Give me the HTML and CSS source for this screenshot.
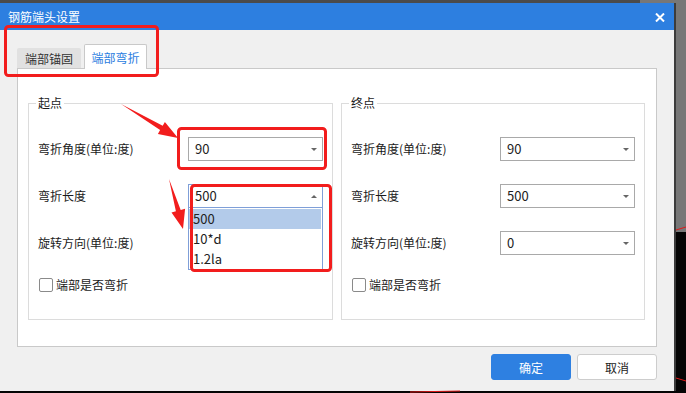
FILE: index.html
```html
<!DOCTYPE html>
<html lang="zh-CN">
<head>
<meta charset="utf-8">
<title>钢筋端头设置</title>
<link rel="stylesheet" href="styles.css">
</head>
<body>
<div class="dialog">
  <div class="titlebar">
    <span class="title">钢筋端头设置</span>
    <svg class="close" width="10" height="9" viewBox="0 0 10 9"><path d="M1 0.5 L9 8.5 M9 0.5 L1 8.5" stroke="#fff" stroke-width="2"/></svg>
  </div>
  <div class="content">
    <div class="tabs">
      <div class="tab">端部锚固</div>
      <div class="tab active">端部弯折</div>
    </div>
    <div class="panel">
      <fieldset class="group">
        <legend>起点</legend>
        <div class="row">
          <span class="label">弯折角度(单位:度)</span>
          <div class="select"><span class="value">90</span><i class="caret"></i></div>
        </div>
        <div class="row">
          <span class="label">弯折长度</span>
          <div class="select open"><span class="value">500</span><i class="caret up"></i>
            <ul class="list">
              <li class="hl">500</li>
              <li>10*d</li>
              <li>1.2la</li>
            </ul>
          </div>
        </div>
        <div class="row">
          <span class="label">旋转方向(单位:度)</span>
          <div class="select covered"><span class="value">0</span><i class="caret"></i></div>
        </div>
        <label class="check"><span class="box"></span>端部是否弯折</label>
      </fieldset>
      <fieldset class="group">
        <legend>终点</legend>
        <div class="row">
          <span class="label">弯折角度(单位:度)</span>
          <div class="select"><span class="value">90</span><i class="caret"></i></div>
        </div>
        <div class="row">
          <span class="label">弯折长度</span>
          <div class="select"><span class="value">500</span><i class="caret"></i></div>
        </div>
        <div class="row">
          <span class="label">旋转方向(单位:度)</span>
          <div class="select"><span class="value">0</span><i class="caret"></i></div>
        </div>
        <label class="check"><span class="box"></span>端部是否弯折</label>
      </fieldset>
    </div>
    <div class="buttons">
      <button class="btn primary">确定</button>
      <button class="btn">取消</button>
    </div>
  </div>
</div>
<svg class="annot" width="686" height="393" viewBox="0 0 686 393">
  <g fill="none" stroke="#f21d1d" stroke-width="3">
    <rect x="5.5" y="26.5" width="152" height="49" rx="3"/>
    <rect x="178.5" y="128.5" width="147" height="40" rx="3"/>
    <rect x="191.5" y="185.5" width="139" height="85" rx="3"/>
  </g>
  <g fill="#f21d1d">
    <polygon points="121,104 162.7,125.7 164.9,121.9 178,138 157.9,133.9 160.1,130.1"/>
    <polygon points="169,179 180.7,210 185.1,208.8 183,229 171.5,212.4 175.9,211.3"/>
  </g>
  <g stroke="#e01818" stroke-width="1">
    <line x1="676" y1="230" x2="686" y2="227"/>
    <line x1="676" y1="378" x2="686" y2="381"/>
    <line x1="410" y1="392" x2="460" y2="391"/>
  </g>
</svg>
</body>
</html>
```

FILE: styles.css
```css
* { box-sizing: border-box; }

html, body {
  margin: 0;
  padding: 0;
}

body {
  width: 686px;
  height: 393px;
  overflow: hidden;
  position: relative;
  font-family: "Noto Sans CJK SC", "Noto Sans", sans-serif;
  font-size: 12px;
  color: #1a1a1a;
  background:
    linear-gradient(#4b4b4b, #4b4b4b) 0 0 / 640px 3px no-repeat,
    linear-gradient(#777 0 232px, #050505 232px);
  padding-top: 3px;
}

.dialog {
  width: 674px;
  height: 388px;
  background: #f0f0f0;
  box-shadow: 2px 0 0 #3c3c3c;
  display: flex;
  flex-direction: column;
}

.titlebar {
  height: 27px;
  background: #2d7fe0;
  color: #fff;
  display: flex;
  align-items: center;
  justify-content: space-between;
  padding: 0 9px 0 8px;
}

.title {
  font-size: 12px;
  line-height: 16px;
}

.close { display: block; margin-top: 1px; }

.content {
  flex: 1;
  padding: 14px 17px 0 17px;
  display: flex;
  flex-direction: column;
}

.tabs {
  display: flex;
  align-items: flex-end;
  gap: 3px;
  height: 24px;
}

.tab {
  height: 20px;
  width: 64px;
  background: #e1e1e1;
  color: #333;
  display: flex;
  align-items: center;
  justify-content: center;
  font-size: 12px;
  border-radius: 2px 2px 0 0;
}

.tab.active {
  height: 25px;
  width: 63px;
  margin-bottom: -1px;
  background: #fff;
  color: #2b7de0;
  border: 1px solid #c9c9c9;
  border-bottom: none;
  position: relative;
  z-index: 1;
  padding-top: 1px;
}

.panel {
  height: 279px;
  background: #fff;
  border: 1px solid #c9c9c9;
  padding: 26px 11px 0 10px;
  display: grid;
  grid-template-columns: 305px 304px;
  column-gap: 8px;
  align-items: start;
}

.group {
  margin: 0;
  border: 1px solid #dcdcdc;
  padding: 26px 9px 26px 9px;
  min-width: 0;
}

.group legend {
  padding: 0 2px;
  margin-left: -2px;
  font-size: 12px;
  line-height: 16px;
  color: #1a1a1a;
}

.row {
  display: flex;
  align-items: center;
  justify-content: space-between;
  height: 24px;
}

.row + .row { margin-top: 23px; }

.label { line-height: 16px; }

.select {
  position: relative;
  width: 135px;
  height: 24px;
  border: 1px solid #a9a9a9;
  background: #fff;
  display: flex;
  align-items: center;
  justify-content: space-between;
  padding: 0 5px 0 6px;
  font-size: 13px;
  color: #222;
}

.select.covered { visibility: hidden; }

.value { line-height: 16px; }

.caret {
  width: 0;
  height: 0;
  border-left: 3px solid transparent;
  border-right: 3px solid transparent;
  border-top: 3px solid #666;
}

.caret.up {
  border-top: none;
  border-bottom: 3px solid #666;
}

.select.open {
  border-color: #7f9fd8;
  z-index: 3;
}

.list {
  position: absolute;
  left: -1px;
  right: -1px;
  top: 23px;
  margin: 0;
  padding: 0;
  list-style: none;
  background: #fff;
  border: 1px solid #7f9fd8;
  border-top: none;
  padding-top: 1px;
  z-index: 2;
}

.list li {
  height: 20px;
  line-height: 20px;
  padding-left: 4px;
  font-size: 13px;
  color: #222;
}

.list li.hl {
  background: #b3cbea;
  margin-right: 1px;
}

.check {
  display: flex;
  align-items: center;
  gap: 3px;
  height: 16px;
  margin-top: 22px;
  line-height: 16px;
}

.box {
  width: 14px;
  height: 14px;
  border: 1px solid #8a8a8a;
  border-radius: 2px;
  background: #fff;
  margin-left: 1px;
}

.buttons {
  display: flex;
  justify-content: flex-end;
  gap: 6px;
  margin-top: 7px;
}

.btn {
  width: 80px;
  height: 26px;
  border-radius: 3px;
  border: 1px solid #cdcdcd;
  background: #fff;
  font-family: "Noto Sans CJK SC", sans-serif;
  font-size: 12px;
  color: #222;
  padding: 0;
}

.btn.primary {
  background: #2e80e1;
  border-color: #2e80e1;
  color: #fff;
}

.annot {
  position: absolute;
  left: 0;
  top: 0;
  pointer-events: none;
  z-index: 5;
}
```
